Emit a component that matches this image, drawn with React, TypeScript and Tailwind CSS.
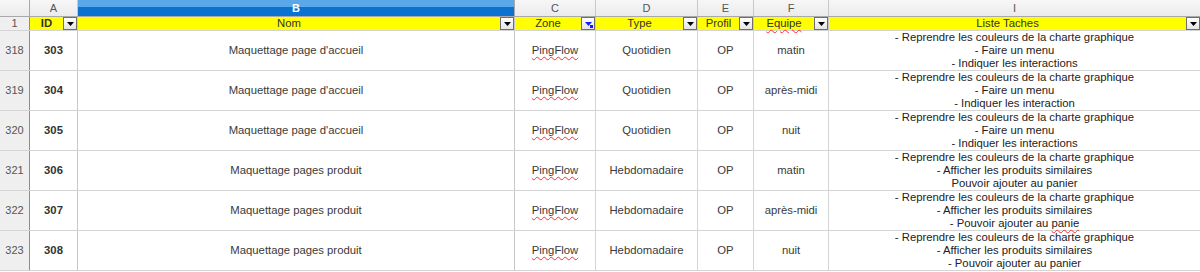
import React from "react";

const FONT = { fontFamily: '"Liberation Sans", Arial, sans-serif' };

const COLS = [
  { key: "A", w: "w-[48px]", title: "ID" },
  { key: "B", w: "w-[437px]", title: "Nom" },
  { key: "C", w: "w-[81px]", title: "Zone" },
  { key: "D", w: "w-[102px]", title: "Type" },
  { key: "E", w: "w-[56px]", title: "Profil" },
  { key: "F", w: "w-[75px]", title: "Equipe" },
];

type Row = {
  n: number;
  id: number;
  nom: string;
  type: string;
  equipe: string;
  tasks: React.ReactNode[];
};

const Spell = ({ children }: { children: React.ReactNode }) => (
  <span className="underline decoration-wavy decoration-red-500 decoration-1 underline-offset-2">{children}</span>
);

const rows: Row[] = [
  { n: 318, id: 303, nom: "Maquettage page d'accueil", type: "Quotidien", equipe: "matin", tasks: ["- Reprendre les couleurs de la charte graphique", "- Faire un menu", "- Indiquer les interactions"] },
  { n: 319, id: 304, nom: "Maquettage page d'accueil", type: "Quotidien", equipe: "après-midi", tasks: ["- Reprendre les couleurs de la charte graphique", "- Faire un menu", "- Indiquer les interaction"] },
  { n: 320, id: 305, nom: "Maquettage page d'accueil", type: "Quotidien", equipe: "nuit", tasks: ["- Reprendre les couleurs de la charte graphique", "- Faire un menu", "- Indiquer les interactions"] },
  { n: 321, id: 306, nom: "Maquettage pages produit", type: "Hebdomadaire", equipe: "matin", tasks: ["- Reprendre les couleurs de la charte graphique", "- Afficher les produits similaires", "Pouvoir ajouter au panier"] },
  { n: 322, id: 307, nom: "Maquettage pages produit", type: "Hebdomadaire", equipe: "après-midi", tasks: ["- Reprendre les couleurs de la charte graphique", "- Afficher les produits similaires", <>- Pouvoir ajouter au <Spell>panie</Spell></>] },
  { n: 323, id: 308, nom: "Maquettage pages produit", type: "Hebdomadaire", equipe: "nuit", tasks: ["- Reprendre les couleurs de la charte graphique", "- Afficher les produits similaires", "- Pouvoir ajouter au panier"] },
];

function Drop({ active }: { active?: boolean }) {
  return (
    <div className="relative w-[14px] h-[13px] shrink-0 border border-[#6e6e6e] bg-gradient-to-b from-white to-[#e4e4e4] flex items-center justify-center">
      <svg width="7" height="4" viewBox="0 0 7 4">
        <path d="M0 0h7L3.5 4z" fill={active ? "#1a1aff" : "#000"} />
      </svg>
      {active && <div className="absolute right-[1px] bottom-[1px] w-[3px] h-[3px] bg-[#1a1aff]" />}
    </div>
  );
}

export default function App() {
  return (
    <div className="w-[1200px] h-[272px] bg-white overflow-hidden text-[11.3px] text-[#3a3a3a]" style={FONT}>
      {/* column letters */}
      <div className="flex h-[17px] border-b border-[#a9a9a9] bg-gradient-to-b from-[#f7f7f7] to-[#ebebeb] text-[11px] text-[#555]">
        <div className="w-[30px] border-r border-[#a9a9a9]" />
        {COLS.map((c) =>
          c.key === "B" ? (
            <div key={c.key} className={`${c.w} border-r border-[#a9a9a9] bg-gradient-to-b from-[#5aa8e8] from-45% to-[#0a73d2] to-45% flex items-center justify-center text-white font-bold leading-none`}>
              B
            </div>
          ) : (
            <div key={c.key} className={`${c.w} border-r border-[#c8c8c8] flex items-center justify-center leading-none`}>
              {c.key}
            </div>
          )
        )}
        <div className="flex-1 flex items-center justify-center leading-none">I</div>
      </div>

      {/* filter header row */}
      <div className="flex h-[14px] border-b border-[#d4d4d4]">
        <div className="w-[30px] border-r border-[#8c8c8c] bg-[#efefef] flex items-center justify-center text-[11px] text-[#555] leading-none">1</div>
        {COLS.map((c) => (
          <div key={c.key} className={`${c.w} border-r border-[#c8c8c8] bg-[#ffff00] flex items-center leading-none`}>
            <div className="flex-1 text-center text-[#333]">
              {c.key === "F" ? <Spell>{c.title}</Spell> : c.key === "A" ? <span className="font-bold">{c.title}</span> : c.title}
            </div>
            <Drop active={c.key === "C"} />
          </div>
        ))}
        <div className="flex-1 bg-[#ffff00] flex items-center leading-none">
          <div className="flex-1 text-center text-[#333]">Liste Taches</div>
          <Drop />
        </div>
      </div>

      {rows.map((r) => (
        <div key={r.n} className="flex h-[40px] border-b border-[#d4d4d4]">
          <div className="w-[30px] border-r border-[#8c8c8c] bg-[#efefef] flex items-center justify-center text-[11px] text-[#555]">{r.n}</div>
          <div className="w-[48px] border-r border-[#c8c8c8] flex items-center justify-center font-bold text-[#333]">{r.id}</div>
          <div className="w-[437px] border-r border-[#c8c8c8] flex items-center justify-center">{r.nom}</div>
          <div className="w-[81px] border-r border-[#d4d4d4] flex items-center justify-center">
            <Spell>PingFlow</Spell>
          </div>
          <div className="w-[102px] border-r border-[#d4d4d4] flex items-center justify-center">{r.type}</div>
          <div className="w-[56px] border-r border-[#d4d4d4] flex items-center justify-center">OP</div>
          <div className="w-[75px] border-r border-[#d4d4d4] flex items-center justify-center">{r.equipe}</div>
          <div className="flex-1 flex flex-col items-center justify-center leading-[13px] text-[#222]">
            {r.tasks.map((t, i) => (
              <div key={i}>{t}</div>
            ))}
          </div>
        </div>
      ))}
    </div>
  );
}
